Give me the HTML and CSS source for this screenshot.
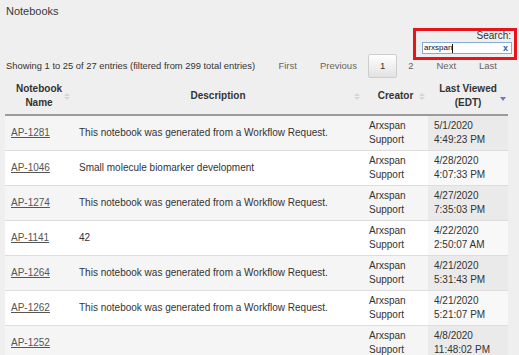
FILE: index.html
```html
<!DOCTYPE html>
<html lang="en">
<head>
    <meta charset="UTF-8">
    <meta name="viewport" content="width=device-width, initial-scale=1.0">
    <title>Notebooks</title>
    <link rel="stylesheet" href="styles.css">
</head>
<body>
    <div class="page">
        <h1 class="page-title">Notebooks</h1>

        <div class="filter">
            <label class="filter-label">Search:</label>
            <div class="search-field">
                <span class="query">arxspan</span><span class="caret"></span>
                <span class="clear">x</span>
            </div>
        </div>

        <div class="toolbar">
            <div class="info">Showing 1 to 25 of 27 entries (filtered from 299 total entries)</div>
            <div class="paginate">
                <a class="page-btn">First</a>
                <a class="page-btn">Previous</a>
                <a class="page-btn current">1</a>
                <a class="page-btn">2</a>
                <a class="page-btn">Next</a>
                <a class="page-btn">Last</a>
            </div>
        </div>

        <table class="notebooks">
            <colgroup>
                <col class="col-name">
                <col class="col-desc">
                <col class="col-creator">
                <col class="col-viewed">
            </colgroup>
            <thead>
                <tr>
                    <th class="sortable">Notebook Name</th>
                    <th class="sortable">Description</th>
                    <th class="sortable">Creator</th>
                    <th class="sorted-desc">Last Viewed (EDT)</th>
                </tr>
            </thead>
            <tbody>
                <tr>
                    <td><a href="#">AP-1281</a></td>
                    <td>This notebook was generated from a Workflow Request.</td>
                    <td>Arxspan<br>Support</td>
                    <td class="sorted">5/1/2020<br>4:49:23 PM</td>
                </tr>
                <tr>
                    <td><a href="#">AP-1046</a></td>
                    <td>Small molecule biomarker development</td>
                    <td>Arxspan<br>Support</td>
                    <td class="sorted">4/28/2020<br>4:07:33 PM</td>
                </tr>
                <tr>
                    <td><a href="#">AP-1274</a></td>
                    <td>This notebook was generated from a Workflow Request.</td>
                    <td>Arxspan<br>Support</td>
                    <td class="sorted">4/27/2020<br>7:35:03 PM</td>
                </tr>
                <tr>
                    <td><a href="#">AP-1141</a></td>
                    <td>42</td>
                    <td>Arxspan<br>Support</td>
                    <td class="sorted">4/22/2020<br>2:50:07 AM</td>
                </tr>
                <tr>
                    <td><a href="#">AP-1264</a></td>
                    <td>This notebook was generated from a Workflow Request.</td>
                    <td>Arxspan<br>Support</td>
                    <td class="sorted">4/21/2020<br>5:31:43 PM</td>
                </tr>
                <tr>
                    <td><a href="#">AP-1262</a></td>
                    <td>This notebook was generated from a Workflow Request.</td>
                    <td>Arxspan<br>Support</td>
                    <td class="sorted">4/21/2020<br>5:21:07 PM</td>
                </tr>
                <tr>
                    <td><a href="#">AP-1252</a></td>
                    <td></td>
                    <td>Arxspan<br>Support</td>
                    <td class="sorted">4/8/2020<br>11:48:02 PM</td>
                </tr>
            </tbody>
        </table>
    </div>
</body>
</html>
```

FILE: styles.css
```css
:root {
    --page-bg: #efefef;
    --text-color: #333;
    --muted-color: #666;
    --row-odd: #f5f5f5;
    --row-odd-sorted: #eaeaea;
    --row-even: #ffffff;
    --row-even-sorted: #f8f8f8;
    --row-line: #dddddd;
    --highlight: #e8141c;
    --sort-color: #6d78c8;
}

body {
    margin: 0;
    background-color: var(--page-bg);
    color: var(--text-color);
    font-family: 'Liberation Sans', Arial, sans-serif;
    font-size: 10px;
    line-height: 14px;
}

.page {
    padding: 0 2px 0 5px;
}

.page-title {
    margin: 0;
    padding: 4px 0 0 1px;
    font-size: 11px;
    font-weight: normal;
    line-height: 14px;
    color: #3a3a3a;
}

/* search box, with the red annotation frame */
.filter {
    width: 90px;
    margin: 10px 0 -7px auto;
    padding: 0 2px 3px 6px;
    border: 3px solid var(--highlight);
    text-align: right;
}

.filter-label {
    display: block;
    font-size: 10px;
    line-height: 10px;
    padding-right: 1px;
}

.search-field {
    display: flex;
    align-items: center;
    height: 10px;
    margin-top: 1px;
    padding: 0 3px 0 1px;
    background: #fff;
    border: 1px solid #86acd9;
    text-align: left;
}

.query {
    font-size: 8px;
    line-height: 10px;
    color: #111;
}

.caret {
    width: 1px;
    height: 9px;
    background: #111;
}

.clear {
    margin-left: auto;
    font-size: 9px;
    font-weight: bold;
    line-height: 10px;
    color: #2b5fb4;
}

.toolbar {
    display: flex;
    justify-content: space-between;
    align-items: center;
    padding: 0 9px 0 1px;
    height: 25px;
}

.info {
    font-size: 9.4px;
    white-space: nowrap;
}

.paginate {
    display: flex;
    align-items: center;
    font-size: 9.5px;
}

.page-btn {
    padding: 0 10.5px;
    border: 1px solid transparent;
    border-radius: 2px;
    line-height: 22px;
    color: var(--muted-color);
    cursor: pointer;
}

.page-btn:last-child {
    padding-right: 10px;
}

.page-btn.current {
    color: var(--text-color);
    border-color: #cdcdcd;
    background: linear-gradient(to bottom, #ffffff 0%, #e2e2e2 100%);
}

/* table */
.notebooks {
    width: calc(100% - 9px);
    margin-top: 3px;
    border-collapse: collapse;
    table-layout: fixed;
}

.col-name { width: 68px; }
.col-desc { width: 290px; }
.col-creator { width: 65px; }
.col-viewed { width: 80px; }

.notebooks th {
    position: relative;
    padding: 1px 8px 4px;
    font-weight: bold;
    text-align: center;
    border-bottom: 2px solid #9b9b9b;
}

.notebooks th.sortable::before,
.notebooks th.sortable::after {
    content: '';
    position: absolute;
    right: 3px;
    border-left: 3px solid transparent;
    border-right: 3px solid transparent;
}

.notebooks th.sortable::before {
    top: calc(50% - 5px);
    border-bottom: 3px solid #d6d6d6;
}

.notebooks th.sortable::after {
    top: calc(50% - 1px);
    border-top: 3px solid #d6d6d6;
}

.notebooks th.sorted-desc::after {
    content: '';
    position: absolute;
    right: 2px;
    top: calc(50% - 1px);
    border-left: 3px solid transparent;
    border-right: 3px solid transparent;
    border-top: 4px solid var(--sort-color);
}

.notebooks td {
    padding: 3px 6px;
    border-top: 1px solid var(--row-line);
    vertical-align: middle;
}

.notebooks tbody tr:first-child td {
    border-top: none;
}

.notebooks tbody tr:nth-child(odd) td { background: var(--row-odd); }
.notebooks tbody tr:nth-child(odd) td.sorted { background: var(--row-odd-sorted); }
.notebooks tbody tr:nth-child(even) td { background: var(--row-even); }
.notebooks tbody tr:nth-child(even) td.sorted { background: var(--row-even-sorted); }

.notebooks a {
    color: #555;
    text-decoration: underline;
}
```
